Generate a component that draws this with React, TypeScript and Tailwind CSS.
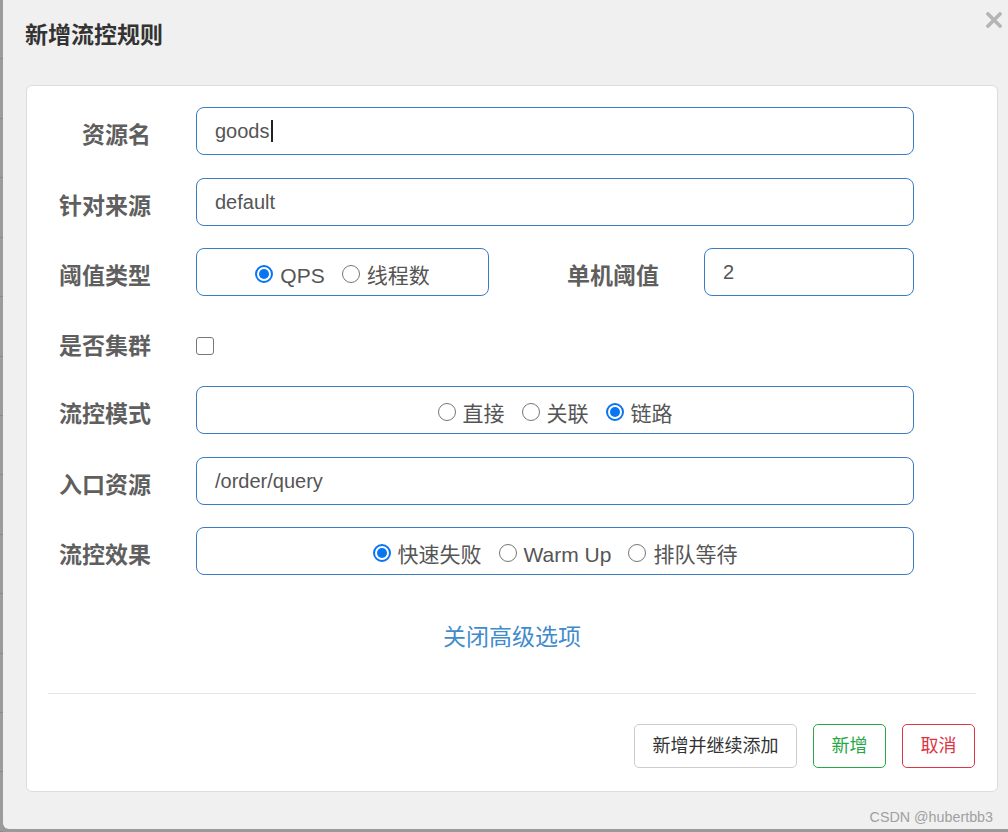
const FONT = '"Liberation Sans", "Noto Sans CJK SC", sans-serif';

function Radio({ checked, label }: { checked?: boolean; label: string }) {
  return (
    <label className="flex items-center gap-[7px]">
      {checked ? (
        <span className="mt-[3px] flex h-[18px] w-[18px] items-center justify-center rounded-full border-2 border-[#0a75f0] bg-white">
          <span className="h-[10px] w-[10px] rounded-full bg-[#0a75f0]" />
        </span>
      ) : (
        <span className="mt-[3px] h-[18px] w-[18px] rounded-full border-[1.5px] border-[#777] bg-white" />
      )}
      <span className="mt-[6px] text-[21px] leading-none text-[#555]">{label}</span>
    </label>
  );
}

function RadioBox({ options, width }: { options: { label: string; checked?: boolean }[]; width: string }) {
  return (
    <div className={`flex h-[48px] items-center justify-center gap-[17px] rounded-[8px] border border-[#3a7cc3] bg-white pt-[1px] ${width}`}>
      {options.map((o) => (
        <Radio key={o.label} label={o.label} checked={o.checked} />
      ))}
    </div>
  );
}

function TextBox({ value, width, caret }: { value: string; width: string; caret?: boolean }) {
  return (
    <div className={`flex h-[48px] items-center rounded-[8px] border border-[#3a7cc3] bg-white pl-[18px] ${width}`}>
      <span className="text-[20px] leading-none text-[#555]">{value}</span>
      {caret && <span className="ml-[1px] h-[22px] w-[2px] bg-[#222]" />}
    </div>
  );
}

function Label({ text, width = "w-[124px]" }: { text: string; width?: string }) {
  return (
    <div className={`mt-[8px] shrink-0 text-right text-[23px] font-bold leading-none text-[#5f5f5f] ${width}`}>
      {text}
    </div>
  );
}

export default function App() {
  return (
    <div className="relative flex h-[832px] w-[1008px] overflow-hidden bg-[#999]" style={{ fontFamily: FONT }}>
      {/* backdrop strip */}
      <div className="flex w-[3px] shrink-0 flex-col bg-[#9b9b9b]">
        {Array.from({ length: 14 }).map((_, i) => (
          <div key={i} className="h-[62px] border-b border-[#8a8a8a]" />
        ))}
      </div>

      <div className="relative flex h-[829px] flex-1 flex-col rounded-bl-[6px] bg-[#f0f0f0]">
        <div className="flex h-[85px] items-start pl-[22px] pt-[24px]">
          <h4 className="text-[23px] font-bold leading-none text-[#333]">新增流控规则</h4>
        </div>
        <button className="absolute right-[6px] top-[12px] text-[#b5b5b5]">
          <svg width="16" height="16" viewBox="0 0 16 16">
            <path d="M2 2 L14 14 M14 2 L2 14" stroke="currentColor" strokeWidth="3.6" strokeLinecap="square" />
          </svg>
        </button>

        <div className="ml-[23px] flex h-[707px] w-[972px] flex-col rounded-[6px] border border-[#dcdcdc] bg-white">
          <div className="flex flex-col gap-[22px] pt-[21px]">
            <div className="mb-[1px] flex h-[48px] items-center gap-[45px]">
              <Label text="资源名" />
              <TextBox value="goods" width="w-[718px]" caret />
            </div>
            <div className="flex h-[48px] items-center gap-[45px]">
              <Label text="针对来源" />
              <TextBox value="default" width="w-[718px]" />
            </div>
            <div className="flex h-[48px] items-center">
              <Label text="阈值类型" />
              <div className="ml-[45px]">
                <RadioBox width="w-[293px]" options={[{ label: "QPS", checked: true }, { label: "线程数" }]} />
              </div>
              <Label text="单机阈值" width="w-[170px]" />
              <div className="ml-[45px]">
                <TextBox value="2" width="w-[210px]" />
              </div>
            </div>
            <div className="flex h-[46px] items-center gap-[45px] pt-[10px]">
              <div className="shrink-0 w-[124px] text-right text-[23px] font-bold leading-none text-[#5f5f5f]">是否集群</div>
              <span className="h-[18px] w-[18px] rounded-[3px] border-[1.5px] border-[#777] bg-white" />
            </div>
            <div className="mb-[1px] flex h-[48px] items-center gap-[45px]">
              <Label text="流控模式" />
              <RadioBox
                width="w-[718px]"
                options={[{ label: "直接" }, { label: "关联" }, { label: "链路", checked: true }]}
              />
            </div>
            <div className="flex h-[48px] items-center gap-[45px]">
              <Label text="入口资源" />
              <TextBox value="/order/query" width="w-[718px]" />
            </div>
            <div className="flex h-[48px] items-center gap-[45px]">
              <Label text="流控效果" />
              <RadioBox
                width="w-[718px]"
                options={[{ label: "快速失败", checked: true }, { label: "Warm Up" }, { label: "排队等待" }]}
              />
            </div>
          </div>

          <div className="mt-[46px] flex h-[32px] items-center justify-center">
            <a className="text-[23px] leading-none text-[#3f8bcc]">关闭高级选项</a>
          </div>

          <div className="mx-[21px] mt-[40px] h-px bg-[#e5e5e5]" />

          <div className="mx-[22px] mt-[30px] flex justify-end gap-[16px]">
            <button className="h-[44px] w-[163px] rounded-[5px] border border-[#ccc] bg-white text-[18px] text-[#333]">
              新增并继续添加
            </button>
            <button className="h-[44px] w-[73px] rounded-[5px] border border-[#28a745] bg-white text-[18px] text-[#28a745]">
              新增
            </button>
            <button className="h-[44px] w-[73px] rounded-[5px] border border-[#dc3545] bg-white text-[18px] text-[#dc3545]">
              取消
            </button>
          </div>
        </div>

        <div className="absolute bottom-[5px] right-[15px] text-[14.3px] leading-none text-[#a0a0a0]">CSDN @hubertbb3</div>
      </div>
    </div>
  );
}
